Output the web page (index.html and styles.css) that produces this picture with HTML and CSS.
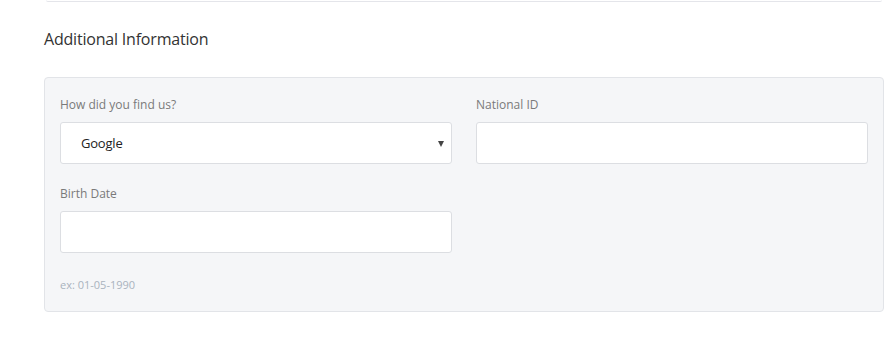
FILE: index.html
```html
<!DOCTYPE html>
<html lang="en">
<head>
  <meta charset="UTF-8" />
  <meta name="viewport" content="width=device-width, initial-scale=1.0"/>
  <title>Additional Information</title>
  <link rel="stylesheet" href="styles.css">
</head>
<body>

  <div class="prev-card"></div>

  <section class="section">
    <h3 class="section-title">Additional Information</h3>

    <div class="panel">
      <div class="grid">
        <div class="field">
          <label for="source">How did you find us?</label>
          <div class="select-wrap">
            <select id="source">
              <option>Google</option>
              <option>Facebook</option>
              <option>Friend</option>
            </select>
            <span class="caret"></span>
          </div>
        </div>

        <div class="field">
          <label for="nid">National ID</label>
          <input type="text" id="nid">
        </div>

        <div class="field">
          <label for="birth">Birth Date</label>
          <input type="text" id="birth">
          <small class="hint">ex: 01-05-1990</small>
        </div>
      </div>
    </div>
  </section>

</body>
</html>
```

FILE: styles.css
```css
* { box-sizing: border-box; }

body {
  margin: 0;
  font-family: 'Open Sans', sans-serif;
  background: #fff;
  color: #333;
}

.prev-card {
  margin: 0 11px 0 46px;
  height: 2px;
  border-bottom: 1px solid #e4e5ea;
  border-radius: 0 0 4px 4px;
}

.section {
  padding: 0 9px 0 44px;
}

.section-title {
  margin: 0;
  padding-top: 26px;
  font-size: 16px;
  font-weight: normal;
  color: #333;
  line-height: 22px;
  letter-spacing: -0.2px;
}

.panel {
  margin-top: 27px;
  background: #f5f6f8;
  border: 1px solid #e2e4e8;
  border-radius: 4px;
  padding: 18px 15px 18px 15px;
}

.grid {
  display: grid;
  grid-template-columns: 1fr 1fr;
  column-gap: 24px;
  row-gap: 21px;
}

.field label {
  display: block;
  font-size: 12px;
  color: #7a7a7a;
  line-height: 18px;
  margin-bottom: 8px;
}

.field input,
.field select {
  width: 100%;
  height: 42px;
  border: 1px solid #dcdee2;
  border-radius: 3px;
  background: #fff;
  font-family: inherit;
  font-size: 13px;
  color: #222;
}

.select-wrap {
  position: relative;
}

.field select {
  appearance: none;
  -webkit-appearance: none;
  padding: 0 20px;
  letter-spacing: -0.2px;
}

.caret {
  position: absolute;
  right: 8px;
  top: 19px;
  width: 0;
  height: 0;
  border-left: 3px solid transparent;
  border-right: 3px solid transparent;
  border-top: 6px solid #444;
}

.hint {
  display: block;
  margin-top: 24px;
  font-size: 11px;
  color: #a9b3be;
  line-height: 16px;
}
```
